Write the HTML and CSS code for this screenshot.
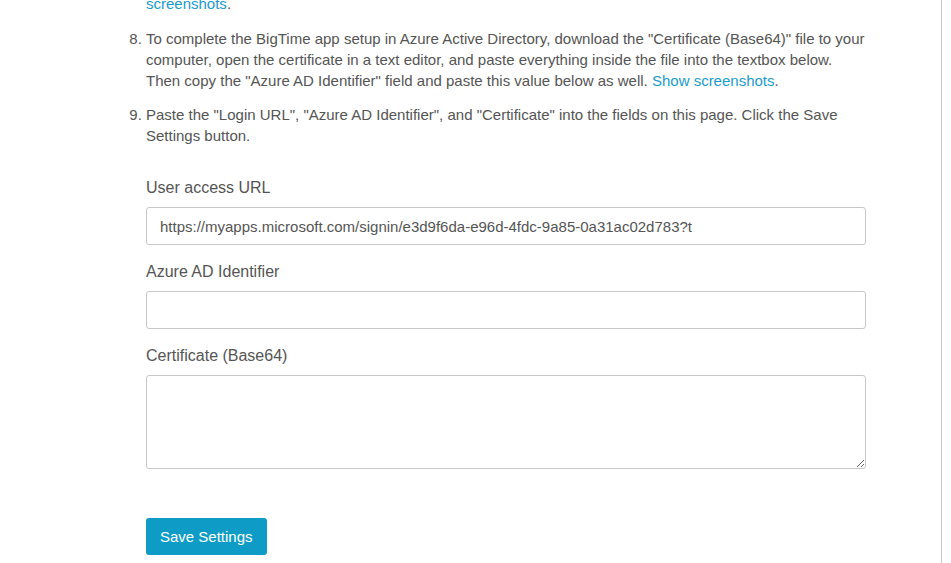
FILE: index.html
```html
<!DOCTYPE html>
<html>
<head>
<meta charset="utf-8">
<link rel="stylesheet" href="styles.css">
</head>
<body>
<div class="page">
  <div class="content">
    <p class="continuation"><a href="#">screenshots</a>.</p>
    <ol class="steps" start="8">
      <li>To complete the BigTime app setup in Azure Active Directory, download the "Certificate (Base64)" file to your computer, open the certificate in a text editor, and paste everything inside the file into the textbox below. Then copy the "Azure AD Identifier" field and paste this value below as well. <a href="#">Show screenshots</a>.</li>
      <li>Paste the "Login URL", "Azure AD Identifier", and "Certificate" into the fields on this page. Click the Save Settings button.</li>
    </ol>
    <form class="settings">
      <div class="field">
        <label class="label">User access URL</label>
        <input class="input" type="text" value="https://myapps.microsoft.com/signin/e3d9f6da-e96d-4fdc-9a85-0a31ac02d783?t">
      </div>
      <div class="field">
        <label class="label">Azure AD Identifier</label>
        <input class="input" type="text" value="">
      </div>
      <div class="field">
        <label class="label">Certificate (Base64)</label>
        <textarea class="textarea"></textarea>
      </div>
      <div class="actions">
        <button class="btn" type="button">Save Settings</button>
      </div>
    </form>
  </div>
</div>
</body>
</html>
```
FILE: styles.css
```css
html, body {
  margin: 0;
  padding: 0;
  background: #fff;
}
body {
  font-family: "Liberation Sans", Arial, sans-serif;
  color: #555;
  font-size: 15px;
  line-height: 21px;
}
.page {
  width: 942px;
  min-height: 563px;
  box-sizing: border-box;
  border-right: 1px solid #c8c8c8;
  overflow: hidden;
}
.content {
  padding-left: 146px;
  width: 723px;
}
a {
  color: #1a9bcd;
  text-decoration: none;
}
.continuation {
  margin: -7px 0 0 0;
}
.steps {
  margin: 14px 0 0 0;
  padding: 0;
}
.steps li {
  margin: 0 0 13px 0;
}
.steps li:last-child {
  margin-bottom: 0;
}
.settings {
  margin-top: 31px;
}
.field {
  display: flex;
  flex-direction: column;
  gap: 8px;
  margin-bottom: 16px;
}
.label {
  font-size: 16px;
  line-height: 22px;
  color: #555;
}
.input {
  box-sizing: border-box;
  width: 720px;
  height: 38px;
  border: 1px solid #c8c8c8;
  border-radius: 3px;
  padding: 0 13px;
  font-family: "Liberation Sans", Arial, sans-serif;
  font-size: 15px;
  color: #555;
  background: #fff;
  outline: none;
}
.textarea {
  box-sizing: border-box;
  width: 720px;
  height: 94px;
  border: 1px solid #c8c8c8;
  border-radius: 3px;
  padding: 8px 13px;
  font-family: "Liberation Sans", Arial, sans-serif;
  font-size: 15px;
  color: #555;
  background: #fff;
  outline: none;
  resize: both;
  display: block;
}
.actions {
  margin-top: 49px;
}
.btn {
  background: #0e9cc7;
  color: #fff;
  border: none;
  border-radius: 3px;
  height: 37px;
  padding: 0 14px;
  font-family: "Liberation Sans", Arial, sans-serif;
  font-size: 15px;
  cursor: pointer;
}
```
